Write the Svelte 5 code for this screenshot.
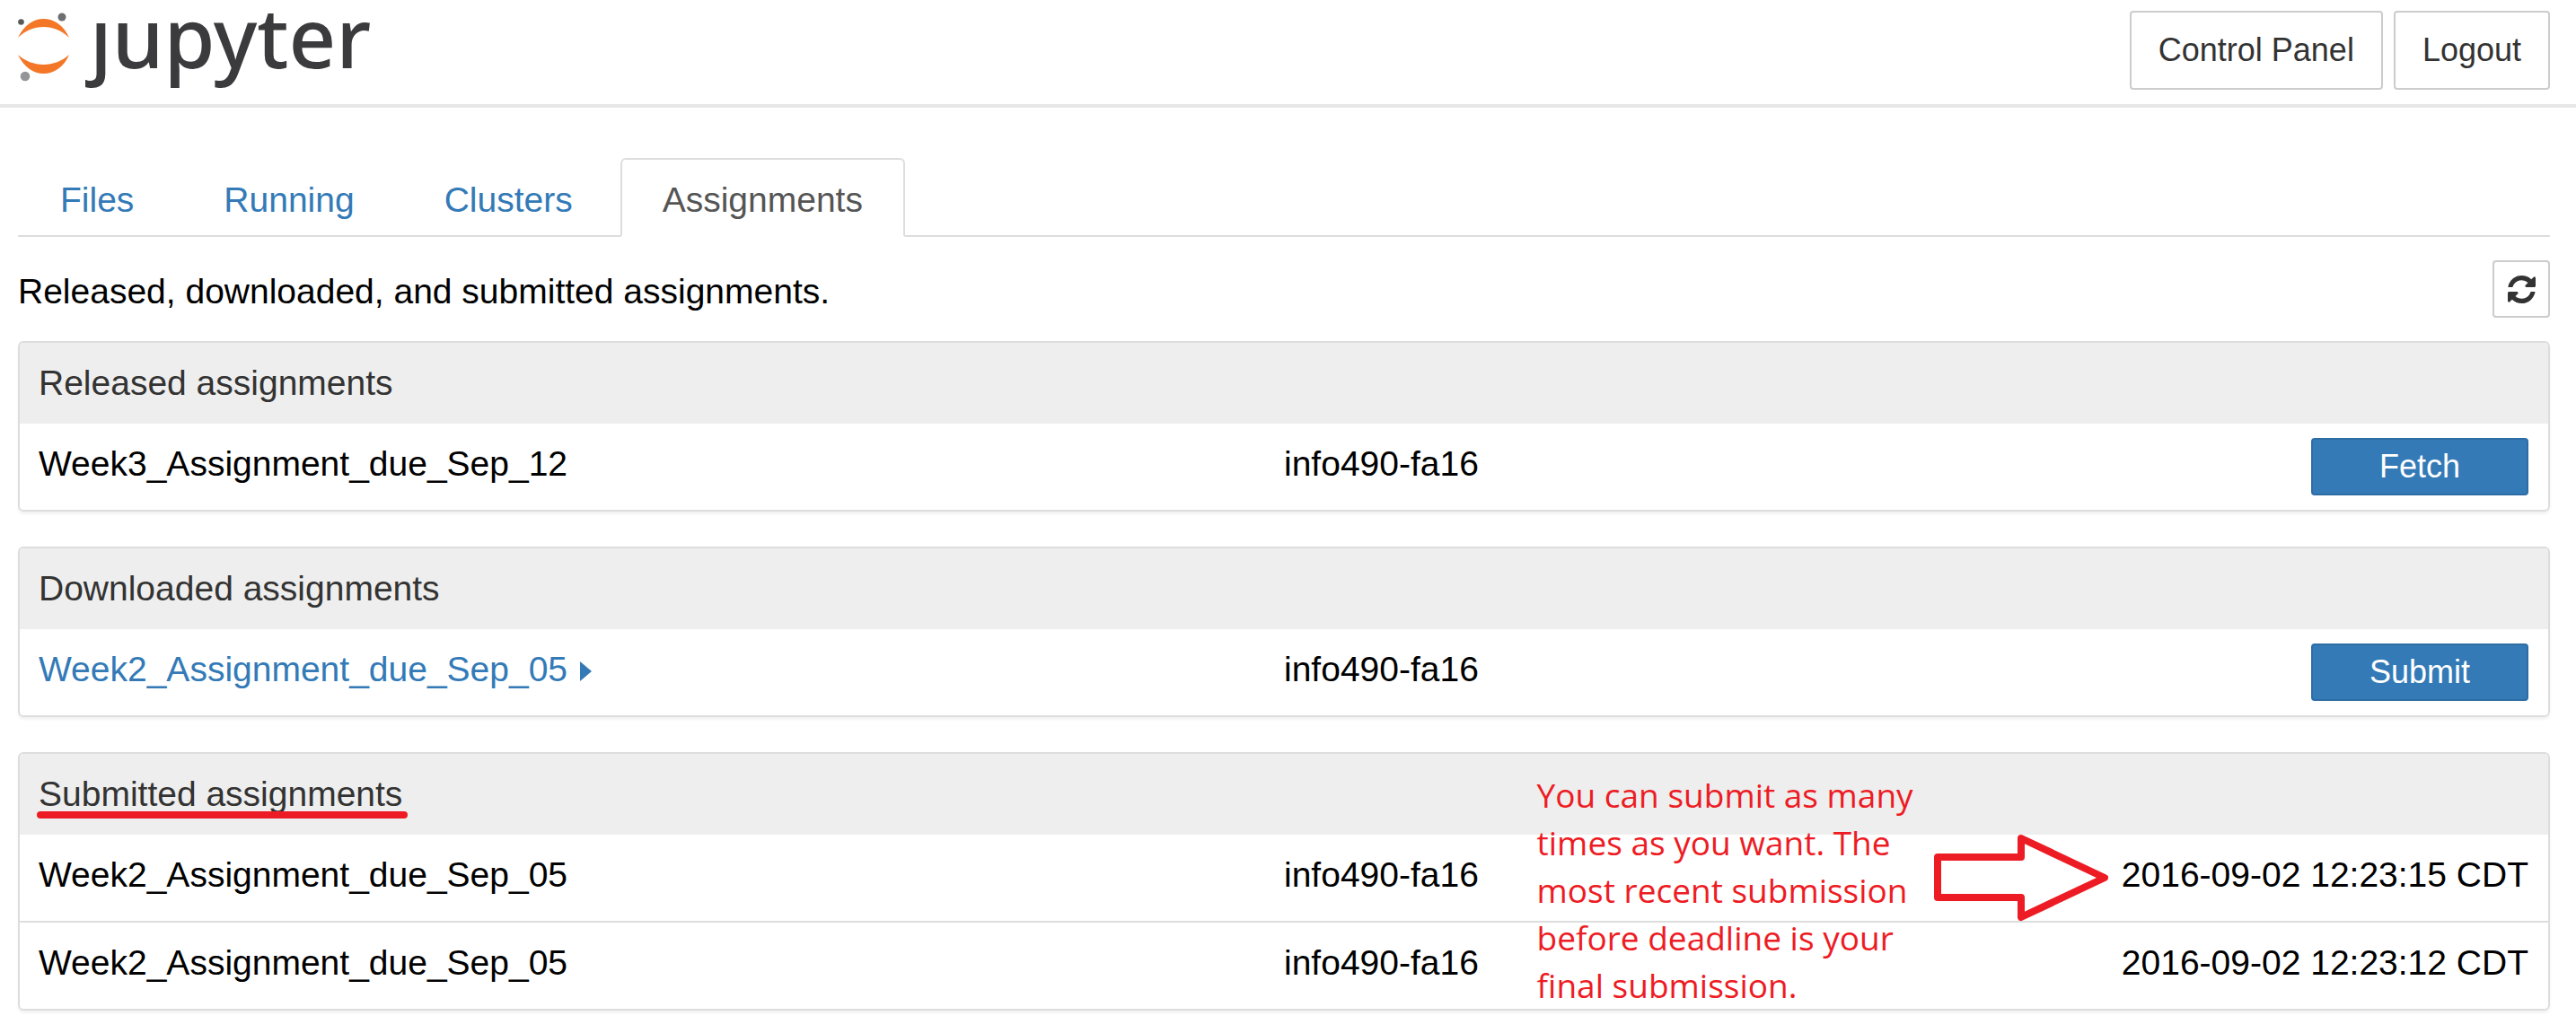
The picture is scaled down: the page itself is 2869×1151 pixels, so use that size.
<script>
  const tabs = ['Files', 'Running', 'Clusters', 'Assignments'];
  let active = $state('Assignments');

  const released = [{ name: 'Week3_Assignment_due_Sep_12', course: 'info490-fa16' }];
  const downloaded = [{ name: 'Week2_Assignment_due_Sep_05', course: 'info490-fa16' }];
  const submitted = [
    { name: 'Week2_Assignment_due_Sep_05', course: 'info490-fa16', time: '2016-09-02 12:23:15 CDT' },
    { name: 'Week2_Assignment_due_Sep_05', course: 'info490-fa16', time: '2016-09-02 12:23:12 CDT' }
  ];
</script>

<header class="header">
  <a class="logo" href="#home">
    <svg class="planet" viewBox="20 14 58 77" aria-hidden="true">
      <path fill="#f37726" d="M20 42C27 28 37 21 48.500 21S71 28 77 42C69 34 59 30 48.500 30S28 34 20 42Z" />
      <path fill="#f37726" d="M20 61C27 75 37 82 48.500 82S71 75 77 61C69 68 59 72 48.500 72S28 68 20 61Z" />
      <circle cx="69" cy="19" r="4.500" fill="#6d6e71" />
      <circle cx="23.500" cy="24.500" r="3.300" fill="#58595b" />
      <circle cx="28" cy="85" r="5.300" fill="#939598" />
    </svg>
    <span class="wordmark">jupyter</span>
  </a>
  <div class="account">
    <button class="btn large">Control Panel</button>
    <button class="btn large">Logout</button>
  </div>
</header>

<main class="content">
  <nav class="tabs">
    {#each tabs as tab}
      <a class="tab" class:active={tab === active} href={'#' + tab.toLowerCase()} onclick={() => (active = tab)}>{tab}</a>
    {/each}
  </nav>

  <div class="toolbar">
    <p class="intro">Released, downloaded, and submitted assignments.</p>
    <button class="btn refresh" aria-label="Refresh">
      <svg class="refresh-icon" viewBox="0 0 1536 1536" aria-hidden="true">
        <path fill="currentColor" d="M1511 928q0 5-1 7-64 268-268 434.500T764 1536q-146 0-282.500-55T238 1324l-129 129q-19 19-45 19t-45-19-19-45V960q0-26 19-45t45-19h448q26 0 45 19t19 45-19 45l-137 137q71 66 161 102t187 36q134 0 250-65t186-179q11-17 53-117 8-23 30-23h192q13 0 22.500 9.500t9.500 22.500zm25-800v448q0 26-19 45t-45 19h-448q-26 0-45-19t-19-45 19-45l138-138Q969 256 768 256q-134 0-250 65T332 500q-11 17-53 117-8 23-30 23H50q-13 0-22.500-9.500T18 608v-7q65-268 270-434.500T768 0q146 0 284 55.500T1297 212l130-129q19-19 45-19t45 19 19 45z" />
      </svg>
    </button>
  </div>

  <div class="panels">
    <section class="panel">
      <h2 class="heading">Released assignments</h2>
      <table class="list" aria-label="Released assignments">
        <tbody>
          {#each released as row}
            <tr>
              <td class="name">{row.name}</td>
              <td class="course">{row.course}</td>
              <td class="status"><button class="btn primary">Fetch</button></td>
            </tr>
          {/each}
        </tbody>
      </table>
    </section>

    <section class="panel">
      <h2 class="heading">Downloaded assignments</h2>
      <table class="list" aria-label="Downloaded assignments">
        <tbody>
          {#each downloaded as row}
            <tr>
              <td class="name"><a class="link" href="#week2">{row.name}<span class="caret"></span></a></td>
              <td class="course">{row.course}</td>
              <td class="status"><button class="btn primary">Submit</button></td>
            </tr>
          {/each}
        </tbody>
      </table>
    </section>

    <section class="panel">
      <h2 class="heading"><span class="marked">Submitted assignments</span></h2>
      <table class="list" aria-label="Submitted assignments">
        <tbody>
          {#each submitted as row}
            <tr>
              <td class="name">{row.name}</td>
              <td class="course">{row.course}</td>
              <td class="status">{row.time}</td>
            </tr>
          {/each}
        </tbody>
      </table>
      <aside class="note">
        You can submit as many<br />times as you want. The<br />most recent submission<br />before deadline is your<br />final submission.
      </aside>
      <svg class="arrow" viewBox="0 0 194 96" aria-hidden="true">
        <path fill="none" stroke="#ed1c24" stroke-width="8" stroke-linejoin="round" d="M4 25H97V4L190 48L97 92V70H4Z" />
      </svg>
    </section>
  </div>
</main>

<style>
  :global(body) {
    background: #fff;
    color: #000;
    font: 39px/56px 'Liberation Sans', Arial, sans-serif;
  }

  .header {
    display: flex;
    justify-content: space-between;
    align-items: flex-start;
    box-sizing: border-box;
    height: 120px;
    padding: 12px 29px 0 20px;
    border-bottom: 4px solid #e7e7e7;
  }
  .logo {
    display: flex;
    align-items: flex-start;
    gap: 22px;
    color: #3b3b3d;
    text-decoration: none;
  }
  .planet {
    width: 58px;
    height: 77px;
    margin-top: 2px;
  }
  .wordmark {
    position: relative;
    font: 500 92px/58px 'Noto Sans', sans-serif;
  }
  /* The wordmark's j has no dot. */
  .wordmark::before {
    content: '';
    position: absolute;
    top: -8px;
    left: 0;
    width: 26px;
    height: 22px;
    background: #fff;
  }
  .account {
    display: flex;
    gap: 12px;
  }

  .btn {
    box-sizing: border-box;
    height: 64px;
    padding: 0 30px;
    border: 2px solid #ccc;
    border-radius: 4px;
    background: #fff;
    color: #333;
    font: 36px/54px 'Liberation Sans', Arial, sans-serif;
    cursor: pointer;
  }
  .large {
    height: 88px;
  }
  .primary {
    display: block;
    width: 242px;
    margin-left: auto;
    border-color: #2e6da4;
    background: #337ab7;
    color: #fff;
  }
  .refresh {
    display: flex;
    align-items: center;
    justify-content: center;
    width: 64px;
    padding: 0;
  }
  .refresh-icon {
    width: 31px;
    height: 31px;
  }

  .content {
    padding: 56px 29px 24px 20px;
  }
  .tabs {
    display: flex;
    gap: 6px;
    border-bottom: 2px solid #ddd;
  }
  .tab {
    margin-bottom: -2px;
    padding: 17px 45px 11px;
    border: 2px solid transparent;
    border-radius: 6px 6px 0 0;
    color: #337ab7;
    text-decoration: none;
  }
  .tab.active {
    border-color: #ddd;
    border-bottom-color: #fff;
    background: #fff;
    color: #555;
  }

  .toolbar {
    display: flex;
    justify-content: space-between;
    padding: 26px 0;
  }
  .intro {
    margin: 7px 0 0;
  }

  .panels {
    display: flex;
    flex-direction: column;
    gap: 39px;
  }
  .panel {
    position: relative;
    border: 2px solid #ddd;
    border-radius: 6px;
    box-shadow: 0 3px 3px rgba(0, 0, 0, 0.05);
  }
  .heading {
    margin: 0;
    padding: 17px 21px;
    border-radius: 4px 4px 0 0;
    background: #eee;
    color: #333;
    font-size: 39px;
    font-weight: 400;
  }
  .marked {
    position: relative;
  }
  .marked::after {
    content: '';
    position: absolute;
    left: -2px;
    right: -6px;
    bottom: -6px;
    height: 8px;
    border-radius: 4px;
    background: #ed1c24;
  }

  .list {
    width: 100%;
    table-layout: fixed;
    border-collapse: separate;
    border-spacing: 0;
  }
  td {
    box-sizing: border-box;
    height: 96px;
    padding: 16px 22px 16px 21px;
    line-height: 58px;
    vertical-align: top;
    white-space: nowrap;
  }
  tr + tr td {
    height: 98px;
    border-top: 2px solid #ddd;
  }
  .name {
    width: 50%;
  }
  .course {
    width: 20%;
    padding-left: 0;
  }
  .status {
    text-align: right;
  }
  .link {
    color: #337ab7;
    text-decoration: none;
  }
  .caret {
    display: inline-block;
    margin-left: 14px;
    border: 11px solid transparent;
    border-right-width: 0;
    border-left: 13px solid #337ab7;
  }

  .note {
    position: absolute;
    top: 19px;
    left: 60%;
    color: #ed1c24;
    font: 500 37px/53px 'Open Sans', sans-serif;
    white-space: nowrap;
  }
  .arrow {
    position: absolute;
    top: 90px;
    right: 490px;
    width: 194px;
    height: 96px;
  }
</style>
